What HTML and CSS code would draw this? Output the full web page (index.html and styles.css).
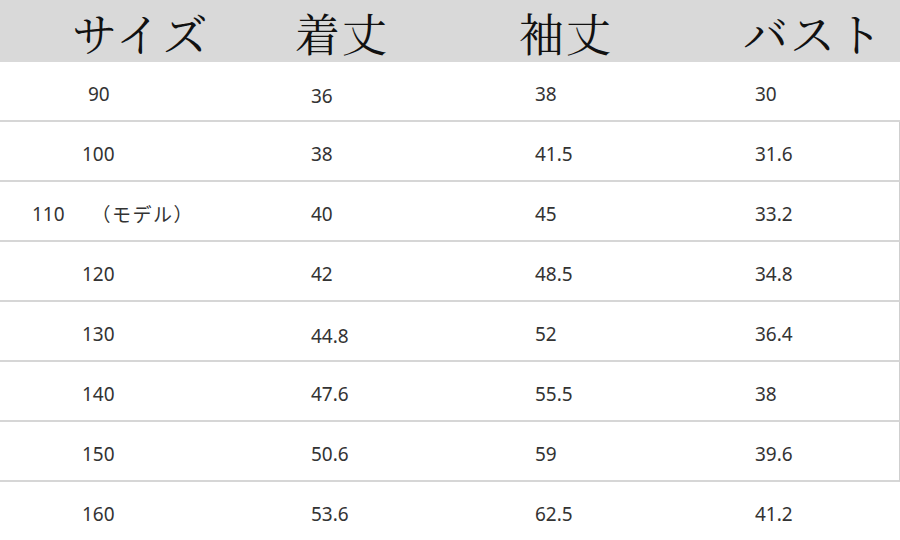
FILE: index.html
```html
<!DOCTYPE html>
<html lang="ja">
<head>
<meta charset="utf-8">
<link rel="stylesheet" href="styles.css">
</head>
<body>
<div class="table">
  <div class="row head">
    <div class="cell">サイズ</div>
    <div class="cell">着丈</div>
    <div class="cell">袖丈</div>
    <div class="cell">バスト</div>
  </div>
  <div class="row">
    <div class="cell">90</div>
    <div class="cell low">36</div>
    <div class="cell">38</div>
    <div class="cell">30</div>
  </div>
  <div class="row framed">
    <div class="cell shift">100</div>
    <div class="cell">38</div>
    <div class="cell">41.5</div>
    <div class="cell">31.6</div>
  </div>
  <div class="row framed">
    <div class="cell model"><span>110</span><span class="note">（モデル）</span></div>
    <div class="cell">40</div>
    <div class="cell">45</div>
    <div class="cell">33.2</div>
  </div>
  <div class="row framed">
    <div class="cell shift">120</div>
    <div class="cell">42</div>
    <div class="cell">48.5</div>
    <div class="cell">34.8</div>
  </div>
  <div class="row framed">
    <div class="cell shift">130</div>
    <div class="cell low">44.8</div>
    <div class="cell">52</div>
    <div class="cell">36.4</div>
  </div>
  <div class="row framed">
    <div class="cell shift">140</div>
    <div class="cell">47.6</div>
    <div class="cell">55.5</div>
    <div class="cell">38</div>
  </div>
  <div class="row framed">
    <div class="cell shift">150</div>
    <div class="cell">50.6</div>
    <div class="cell">59</div>
    <div class="cell">39.6</div>
  </div>
  <div class="row last">
    <div class="cell shift">160</div>
    <div class="cell">53.6</div>
    <div class="cell">62.5</div>
    <div class="cell">41.2</div>
  </div>
</div>
</body>
</html>
```
FILE: styles.css
```css
html, body {
  margin: 0;
  padding: 0;
  background: #ffffff;
}
body {
  width: 900px;
  height: 540px;
  overflow: hidden;
  font-family: "Noto Sans", "Noto Sans CJK JP", sans-serif;
  color: #333333;
}
.table {
  display: flex;
  flex-direction: column;
}
.row {
  display: grid;
  grid-template-columns: 223px 224px 220px 233px;
  height: 58px;
  border-bottom: 2px solid #d6d6d6;
  box-sizing: content-box;
}
.row.framed {
  border-right: 1px solid #cfcfcf;
  width: 899px;
}
.row.last {
  border-bottom: none;
}
.cell {
  display: flex;
  align-items: center;
  padding-left: 88px;
  padding-top: 6px;
  font-size: 19px;
}
.cell.low {
  padding-top: 9px;
}
.cell.shift {
  padding-left: 82px;
}
.cell.model {
  padding-left: 32px;
  gap: 27px;
}
.note {
  letter-spacing: 1.5px;
}
.row.head {
  height: 62px;
  background: #d9d9d9;
  border-bottom: none;
}
.row.head .cell {
  padding-left: 72px;
  padding-top: 2px;
  font-family: "Noto Serif CJK JP", "Noto Sans CJK JP", serif;
  font-size: 45px;
  letter-spacing: 2px;
  color: #111111;
  line-height: 1;
}
.row.head .cell:last-child {
  padding-left: 76px;
}
```
